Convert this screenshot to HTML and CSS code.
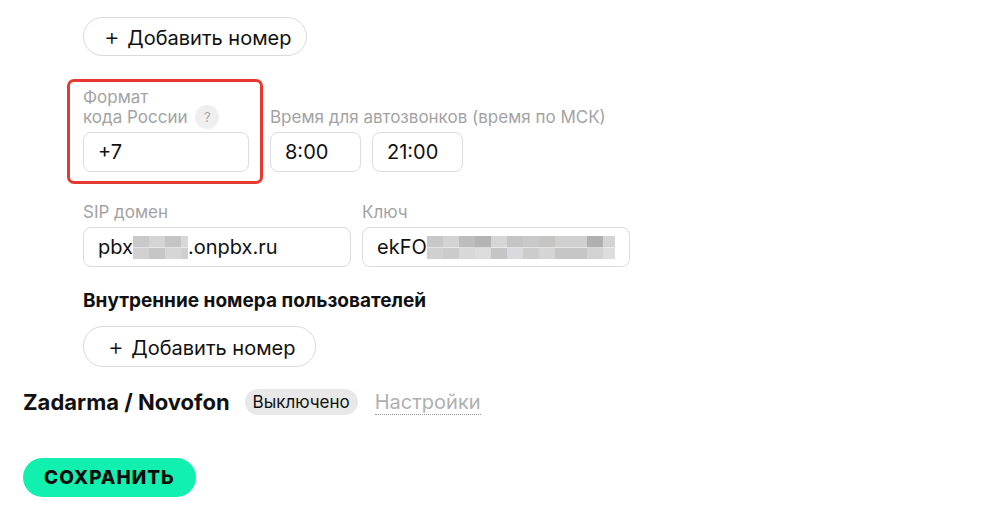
FILE: index.html
```html
<!DOCTYPE html>
<html lang="ru">
<head>
  <meta charset="UTF-8">
  <title>Телефония</title>
  <link rel="stylesheet" href="styles.css">
</head>
<body>

  <div class="page">
    <div class="provider-body">
      <button class="add-btn"><span class="plus">+</span> Добавить номер</button>

      <div class="row row-top">
        <div class="field field-code">
          <label>Формат<br>кода России <span class="hint">?</span></label>
          <div class="input">+7</div>
        </div>
        <div class="field">
          <label>Время для автозвонков (время по МСК)</label>
          <div class="time-pair">
            <div class="input input-time">8:00</div>
            <div class="input input-time">21:00</div>
          </div>
        </div>
      </div>

      <div class="row row-sip">
        <div class="field field-wide">
          <label>SIP домен</label>
          <div class="input">pbx<span class="blur blur-short"></span>.onpbx.ru</div>
        </div>
        <div class="field field-wide">
          <label>Ключ</label>
          <div class="input">ekFO<span class="blur blur-long"></span></div>
        </div>
      </div>

      <h3 class="section-title">Внутренние номера пользователей</h3>
      <button class="add-btn add-btn-wide"><span class="plus">+</span> Добавить номер</button>
    </div>

    <div class="provider-head">
      <h2>Zadarma / Novofon</h2>
      <span class="status">Выключено</span>
      <a class="settings-link">Настройки</a>
    </div>

    <button class="save-btn">Сохранить</button>
  </div>

</body>
</html>
```

FILE: styles.css
```css
body {
  margin: 0;
  font-family: Inter, "Noto Sans", sans-serif;
  color: #111;
  background: #fff;
}
.page {
  padding: 17px 0 0 23px;
}
.provider-body {
  padding-left: 60px;
}
button {
  font-family: inherit;
  cursor: pointer;
}
.add-btn {
  display: block;
  height: 39px;
  padding: 0 15px 0 20px;
  border: 1px solid #dadada;
  border-radius: 20px;
  background: #fff;
  font-size: 20px;
  color: #111;
}
.add-btn-wide {
  height: 41px;
  padding: 0 20px 0 24px;
}
.plus {
  font-size: 24px;
  font-weight: 300;
  margin-right: 2px;
}
.row {
  display: flex;
  align-items: flex-end;
  gap: 21px;
}
.row-top {
  margin-top: 31px;
}
.row-sip {
  margin-top: 30px;
  gap: 11px;
}
.field label {
  display: block;
  font-size: 17px;
  line-height: 20px;
  color: #a3a3a3;
  margin-bottom: 5px;
}
.field-code {
  width: 166px;
  border: 3px solid #e53a31;
  border-radius: 7px;
  padding: 5px 11px 9px 13px;
  margin: -8px -14px -12px -16px;
}
.hint {
  display: inline-block;
  width: 24px;
  height: 24px;
  margin: -4px 0 -4px 3px;
  border-radius: 50%;
  background: #efefef;
  color: #a8a8a8;
  font-size: 13px;
  line-height: 24px;
  text-align: center;
  vertical-align: 1px;
}
.input {
  box-sizing: border-box;
  height: 40px;
  padding: 0 14px;
  border: 1px solid #dcdcdc;
  border-radius: 8px;
  font-size: 20px;
  line-height: 38px;
  color: #111;
  white-space: nowrap;
  overflow: hidden;
}
.time-pair {
  display: flex;
  gap: 11px;
}
.input-time {
  width: 91px;
}
.field-wide {
  width: 268px;
}
.blur {
  display: inline-block;
  height: 23px;
  vertical-align: -5px;
  background:
    linear-gradient(to right, #c9c9c9 0 16px, #d4d4d4 16px 32px, #c4c4c4 32px 48px, #d8d8d8 48px) top / 100% 50% no-repeat,
    linear-gradient(to right, #d1d1d1 0 16px, #c6c6c6 16px 32px, #d6d6d6 32px 48px, #cfcfcf 48px) bottom / 100% 50% no-repeat;
}
.blur-short {
  width: 55px;
}
.blur-long {
  width: 188px;
  background:
    linear-gradient(to right, #c8c8c8 0 16px, #d3d3d3 16px 32px, #bdbdbd 32px 48px, #b4b4b4 48px 64px, #d6d6d6 64px 80px, #c4c4c4 80px 96px, #c9c9c9 96px 112px, #c7c4c4 112px 128px, #d0d0d0 128px 160px, #b0b0b0 160px 176px, #d4d4d4 176px) top / 100% 50% no-repeat,
    linear-gradient(to right, #d0d0d0 0 16px, #cbcbcb 16px 32px, #d8d8d8 32px 48px, #dcdcdc 48px 64px, #c5c5c5 64px 80px, #d9d9de 80px 96px, #cccccc 96px 112px, #d5d5d5 112px 128px, #c6c6c6 128px 160px, #d2d2d2 160px 176px, #dddddd 176px) bottom / 100% 50% no-repeat;
}
.section-title {
  margin: 23px 0 14px;
  font-size: 19px;
  line-height: 22px;
  font-weight: 700;
}
.provider-head {
  display: flex;
  align-items: center;
  gap: 15px;
  margin-top: 21px;
  height: 28px;
}
.provider-head h2 {
  margin: 0;
  font-size: 22px;
  font-weight: 700;
}
.status {
  height: 26px;
  padding: 0 8px;
  border-radius: 13px;
  background: #e8e8e8;
  font-size: 17px;
  line-height: 26px;
}
.settings-link {
  margin-left: 2px;
  font-size: 20px;
  color: #b0b0b0;
  border-bottom: 1px dotted #9a9a9a;
  line-height: 24px;
}
.save-btn {
  display: block;
  margin-top: 42px;
  height: 39px;
  padding: 0 21px;
  border: none;
  border-radius: 20px;
  background: #12f0b0;
  font-size: 19px;
  font-weight: 800;
  letter-spacing: 1px;
  text-transform: uppercase;
  color: #0d0d0d;
}
```
